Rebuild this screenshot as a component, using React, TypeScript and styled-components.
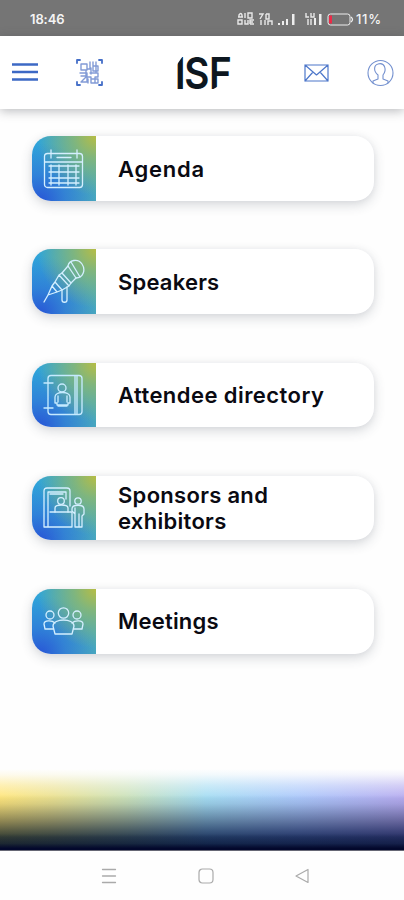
import React from "react";
import styled, { createGlobalStyle } from "styled-components";

const GlobalStyle = createGlobalStyle`
  * { box-sizing: border-box; }
  body { margin: 0; background: #fefefe; font-family: Inter, "Liberation Sans", sans-serif; }
`;

const Screen = styled.div`
  width: 404px;
  height: 900px;
  display: flex;
  flex-direction: column;
  overflow: hidden;
  background: #fefefe;
`;

const StatusBar = styled.div`
  height: 36px;
  flex: none;
  display: flex;
  align-items: center;
  padding: 2px 22px 0 30px;
  background: #757575;
  color: #f4f4f4;
`;

const Clock = styled.span`
  flex: 1;
  font-size: 13px;
  font-weight: 600;
  letter-spacing: -0.1px;
`;

const StatusIcons = styled.svg`
  width: 119px;
  height: 18px;
  display: block;
`;

const Percent = styled.span`
  width: 26px;
  font: 500 13px Inter, sans-serif;
  letter-spacing: 0.7px;
  white-space: nowrap;
`;

const Header = styled.header`
  height: 73px;
  flex: none;
  display: grid;
  grid-template-columns: 64px 113px 127px 63px 37px;
  align-items: center;
  background: #fff;
  box-shadow: 0 2px 10px rgba(60, 65, 72, 0.36);
  z-index: 1;
`;

const HeaderButton = styled.button<{ $inset?: number }>`
  padding: 0 0 0 ${(p) => p.$inset ?? 0}px;
  border: 0;
  background: none;
  display: flex;
`;

const Glyph = styled.svg`
  display: block;
  flex: none;
  fill: none;
  stroke-linecap: round;
  stroke-linejoin: round;
`;

const Logo = styled.div`
  display: flex;
  align-items: center;
  height: 44px;
  font: 600 44px/44px Inter, sans-serif;
  color: #0d1720;
`;

const LogoLetter = styled.span<{ $width: number; $shift: number; $squeeze: number; $clip?: string }>`
  width: ${(p) => p.$width}px;
  text-indent: ${(p) => p.$shift}px;
  transform: scaleX(${(p) => p.$squeeze});
  transform-origin: left;
  clip-path: ${(p) => p.$clip ?? "none"};
  white-space: nowrap;
`;

const Menu = styled.main`
  flex: 1;
  display: flex;
  flex-direction: column;
  gap: 48.7px;
  padding: 27.3px 30px 0 32px;
`;

const Card = styled.a`
  height: 64.5px;
  display: flex;
  align-items: center;
  border-radius: 19px;
  background: #fff;
  box-shadow: 0 4px 12px rgba(50, 58, 75, 0.19), 0 0 6px rgba(50, 58, 75, 0.04);
`;

const Tile = styled.div`
  width: 64px;
  height: 100%;
  flex: none;
  display: grid;
  place-items: center;
  border-radius: 19px 0 0 19px;
  background:
    radial-gradient(circle at 100% 0, #b6bd45 0, rgba(139, 184, 112, 0.85) 24%, rgba(93, 177, 170, 0) 65%),
    radial-gradient(circle at 12% 100%, #2856d6 0, rgba(43, 105, 220, 0.6) 30%, rgba(49, 150, 215, 0) 68%),
    linear-gradient(115deg, #2da4dc, #49a9bd);
`;

const Label = styled.span<{ $spacing: number }>`
  padding-left: 22px;
  font-size: 22px;
  line-height: 26px;
  font-weight: 600;
  letter-spacing: ${(p) => p.$spacing}px;
  color: #0a0a12;
  white-space: pre-line;
`;

const Glow = styled.div`
  height: 82px;
  flex: none;
  border-bottom: 1px solid #666775;
  background:
    linear-gradient(180deg, #fefefe 0%, rgba(254,254,254,.86) 7%, rgba(254,254,254,.42) 20%, rgba(254,254,254,0) 36%),
    linear-gradient(180deg, rgba(3,8,44,0) 80%, rgba(5,18,50,.45) 92%, #03082c 98%),
    linear-gradient(180deg, #fff 32%, #e4e6ea 43%, #bcc0ca 53%, #8c92a4 65%, #5a6684 76%, #38486c 84%, #28385c 100%),
    linear-gradient(90deg, #ffe67e 0%, #ece292 13%, #cde2ba 31%, #a6ddf3 51%, #adc9fb 74%, #b7adf0 100%);
  background-blend-mode: normal, normal, multiply, normal;
`;

const NavBar = styled.nav`
  height: 49px;
  flex: none;
  display: flex;
  align-items: center;
  justify-content: space-between;
  padding: 1px 94px 0 101px;
  background: #fefefe;
`;

const CalendarIcon = () => (
  <Glyph width="42" height="42" viewBox="0 0 42 42" stroke="#d4efff" strokeWidth="1.3">
    <rect x="1.5" y="5.5" width="38" height="34" rx="3" />
    <path d="M2 14h37M8 2v8M34 2v8M14 9.5h14" />
    <path d="M6 18h30M6 24h30M6 30h30M6 35h30M8 17v20M16 17v20M25 17v20M33 17v20" />
  </Glyph>
);

const MicrophoneIcon = () => (
  <Glyph width="42" height="46" viewBox="0 0 42 46" stroke="#d4efff" strokeWidth="1.3">
    <path d="M25 7C26 1 35-1 39 5s1 14-6 14z" />
    <path d="M25 7L19 14l9 10 5-5M28 3l9 15" />
    <path d="M19 14l-3 2 10 11 2-3M16 16l-4 7 7 8 7-4M12 23l-3 4 5 6 5-2M9 27L5 36l9-3M5 36l-4 7" />
    <path d="M19 31v10c0 3 5 3 5 0V28" />
  </Glyph>
);

const DirectoryIcon = () => (
  <Glyph width="42" height="42" viewBox="0 0 42 42" stroke="#c5eaff" strokeWidth="1.35">
    <rect x="5" y="1.5" width="34" height="39" rx="3" />
    <path d="M32 2v38m2-38v38M1 9h9M1 34h9" />
    <circle cx="19" cy="14" r="4" />
    <path d="M14 31v-2h-2v-6c0-6 15-6 15 0v6h-2v2zM15 22v6m9-6v6M15 32h9" />
  </Glyph>
);

const BoothIcon = () => (
  <Glyph width="42" height="42" viewBox="0 0 42 42" stroke="#d4efff" strokeWidth="1.3">
    <path d="M5 40H1V4c0-2 1-3 3-3h20c2 0 3 1 3 3v15M5 40V5h18v7M7 7h13M7 25h22v15H1" />
    <circle cx="18" cy="14" r="3.3" />
    <path d="M12 25v-4c0-4 13-4 13 0v4" />
    <circle cx="35" cy="14" r="3.2" />
    <path d="M32 40V27l-3-3v-2c0-5 12-5 12 0v5l-2 2v11h-3V27v13zM32 21v8" />
  </Glyph>
);

const MeetingIcon = () => (
  <Glyph width="42" height="30" viewBox="0 0 42 30" stroke="#d4efff" strokeWidth="1.3">
    <circle cx="20.5" cy="7" r="5.2" />
    <circle cx="7" cy="9" r="4" />
    <circle cx="34" cy="9" r="4" />
    <path d="M12 28h17l2-8c0-8-21-8-21 0zM10 23H2l-1-5c0-4 8-4 11-1M31 23h8l1-5c0-4-8-4-11-1" />
  </Glyph>
);

const items = [
  { label: "Agenda", spacing: 0.75, Icon: CalendarIcon },
  { label: "Speakers", spacing: 0.2, Icon: MicrophoneIcon },
  { label: "Attendee directory", spacing: 0.44, Icon: DirectoryIcon },
  { label: "Sponsors and\nexhibitors", spacing: 0.3, Icon: BoothIcon },
  { label: "Meetings", spacing: 0.2, Icon: MeetingIcon },
];

export default function App() {
  return (
    <>
      <GlobalStyle />
      <Screen>
        <StatusBar>
          <Clock>18:46</Clock>
          <StatusIcons viewBox="0 0 119 18">
            <g fill="none" stroke="#e8e8e8" strokeWidth="1.4">
              <path d="M2 7V5q2-3 3 0v2M1 7h5M8 3v5M11 3h4v5h-4zM1 10h4v4H1zM8 10v4h3v-4M13 14v-4h4M13 12h3M13 14h4" />
              <path d="M22 4h4l-3 5M29 4v5h3V4h-3M24 10v5M28 10v5M31 15v-4h4v4" />
              <path d="M69 3v4h3m2-4v4h3V3M71 9v6M74 9v6" />
            </g>
            <path fill="#ededed" d="M41 13h2v2h-2zM45 11h2v4h-2zM49 9h2v6h-2zM55 4h2.5v11H55zM77 8h2v7h-2zM82 4h2.5v11H82z" />
            <rect x="91" y="4" width="22" height="11" rx="2.5" fill="none" stroke="#ededed" />
            <path d="M114 7q3 2.5 0 5" fill="none" stroke="#ededed" strokeWidth="1.3" />
            <path d="M92 5.5h3v8h-3z" fill="#ed2947" />
          </StatusIcons>
          <Percent>11%</Percent>
        </StatusBar>
        <Header>
          <HeaderButton aria-label="Menu" $inset={12}>
            <Glyph width="26" height="20" stroke="#3d69c5" strokeWidth="2.5" strokeLinecap="butt">
              <path d="M0 1.5h26M0 9h26M0 16.5h26" />
            </Glyph>
          </HeaderButton>
          <HeaderButton aria-label="Scan code" $inset={12}>
            <Glyph width="27" height="27" stroke="#829bd6" strokeWidth="1.4">
              <path d="M1 4V1h3M23 1h3v3M1 23v3h3M23 26h3v-3" stroke="#456fc8" strokeWidth="1.8" />
              <path d="M5 5h6v6H5zM14 3v7h-3m6-7v4h5v5h-5V7M4 14h7v3H5m5-5v6l-5 5h6v-5h4v6h7v-4h-6m-2-6h8v4h-3v6m-4-15v6m5-9v5M12 20v4M20 3v10" />
            </Glyph>
          </HeaderButton>
          <Logo aria-label="ISF">
            <LogoLetter $width={8} $shift={-2.5} $squeeze={0.9} $clip="polygon(0 32%, 85% 12%, 100% 12%, 100% 100%, 0 100%)">I</LogoLetter>
            <LogoLetter $width={25} $shift={-0.8} $squeeze={0.88}>S</LogoLetter>
            <LogoLetter $width={26} $shift={-1} $squeeze={0.88} $clip="polygon(0 0, 100% 0, 100% 62%, 0 92%)">F</LogoLetter>
          </Logo>
          <HeaderButton aria-label="Messages">
            <Glyph width="26" height="20" stroke="#4d77ca" strokeWidth="1.2">
              <path d="M1 2h23v16H1zM1 2l11.5 10L24 2M1 18l8-9M24 18l-8-9" />
            </Glyph>
          </HeaderButton>
          <HeaderButton aria-label="Profile">
            <Glyph width="28" height="28" stroke="#7390cf" strokeWidth="1.1">
              <circle cx="13.5" cy="14" r="12.5" />
              <path d="M6 24v-2l5-2v-4c-5-4-4-10 0-11 7-2 9 6 5 11v4l5 2v2" />
            </Glyph>
          </HeaderButton>
        </Header>
        <Menu>
          {items.map(({ label, spacing, Icon }) => (
            <Card key={label}>
              <Tile><Icon /></Tile>
              <Label $spacing={spacing}>{label}</Label>
            </Card>
          ))}
        </Menu>
        <Glow />
        <NavBar>
          <Glyph width="16" height="16" stroke="#aaa" strokeWidth="1.3"><path d="M1.5 1.5h13M1.5 8h13M1.5 14.5h13" /></Glyph>
          <Glyph width="16" height="16" stroke="#aaa" strokeWidth="1.2"><rect x="1" y="1" width="14" height="14" rx="3.5" /></Glyph>
          <Glyph width="16" height="16" stroke="#aaa" strokeWidth="1.2"><path d="M14 1.5v13L2 8z" /></Glyph>
        </NavBar>
      </Screen>
    </>
  );
}
